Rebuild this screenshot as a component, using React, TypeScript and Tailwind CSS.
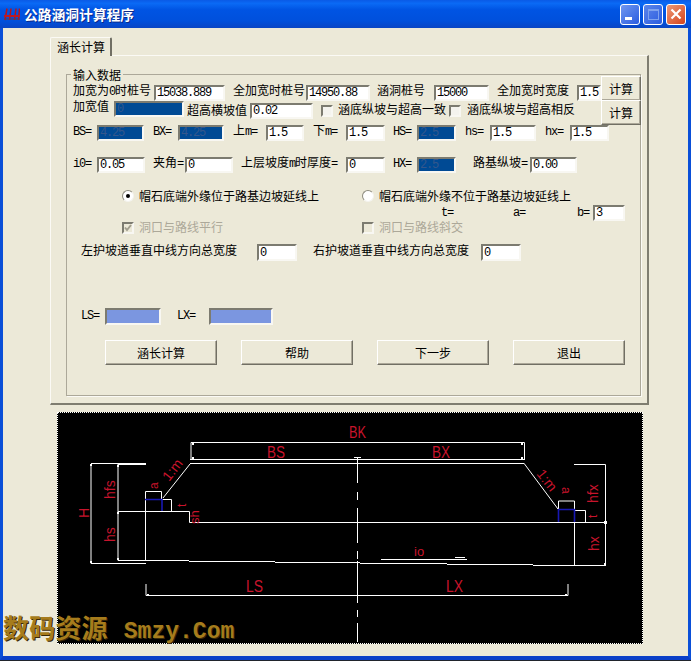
import type { ReactNode } from 'react';

const sunken = 'border-2 border-t-[#7c7b70] border-l-[#7c7b70] border-r-[#f8f7f2] border-b-[#f8f7f2]';
const raised = 'border border-t-white border-l-white border-r-[#716f64] border-b-[#716f64] shadow-[inset_-1px_-1px_0_#aca899] bg-[#ece9d8] flex items-center justify-center shrink-0';

// latin text in the dialog is half width: 6px a character
const M = ({ children }: { children: ReactNode }) => (
  <span className="font-['Liberation_Mono',monospace] text-[12px] leading-[12px] tracking-[-1.2px]">{children}</span>
);

const Field = ({ value, className, tone = 'white' }: { value?: string; className: string; tone?: 'white' | 'blue' | 'soft' }) => {
  const bg = tone === 'blue' ? 'bg-[#004a94] text-[#34578c]' : tone === 'soft' ? 'bg-[#7b96e0]' : 'bg-white text-black';
  return (
    <div className={`${className} ${sunken} ${bg} shrink-0 pl-[1px] flex items-center overflow-hidden`}>
      <M>{value}</M>
    </div>
  );
};

const Check = ({ className, checked, disabled }: { className: string; checked?: boolean; disabled?: boolean }) => (
  <div className={`${className} ${sunken} w-[12px] h-[12px] shrink-0 ${disabled ? 'bg-[#ece9d8]' : 'bg-[#f4f3ee]'}`}>
    {checked && (
      <svg viewBox="0 0 8 8" className="w-[8px] h-[8px] block">
        <path d="M1 3.5 L3 6 L7 1" fill="none" stroke="#a19e8e" strokeWidth="2" />
      </svg>
    )}
  </div>
);

const Radio = ({ className, selected }: { className: string; selected?: boolean }) => (
  <div className={`${className} w-[12px] h-[12px] shrink-0 rounded-full bg-white border border-t-[#8d8b7e] border-l-[#8d8b7e] border-r-[#f4f3ee] border-b-[#f4f3ee] flex items-center justify-center`}>
    {selected && <div className="w-[4px] h-[4px] rounded-full bg-black" />}
  </div>
);

const WinButton = ({ className, children }: { className: string; children: ReactNode }) => (
  <div className={`${className} w-[20px] h-[21px] rounded-[3px] border border-white shrink-0 relative flex items-center justify-center`}>{children}</div>
);

const Diagram = () => (
  <svg viewBox="58 413 584 230" className="block w-full h-full">
    <g stroke="#ffffff" strokeWidth="1" fill="none">
      {/* top width */}
      <path d="M191 460 V442.5 H524.5 V460 M190 459.5 H524.5 M190 463.5 H524.5" />
      <path d="M190 464 L163 498 M524.5 464 L558 509" />
      {/* left step */}
      <path d="M145.5 491.5 H161.5 V499.5 H171.5 V511.5 M145.5 491.5 V560.5" />
      <path d="M118 511.5 H189.5 V522.5 H607" />
      <path d="M91 464 V563.5 M118 464 V560.5 M91 463.5 H146 M118 464.5 H146 M91 563.5 H146" />
      <path d="M118 560.5 H189 M189 561.5 H275 M275 562.5 H360 M360 563.5 H447 M447 564.5 H533 M533 565.5 H606" />
      {/* right step */}
      <path d="M558.5 509 V501 H574.5 V509 M574.5 522 V565 M574 510.5 H585.5 V522" />
      <path d="M574 464.5 H605.5 V565" />
      {/* bottom width */}
      <path d="M146 584 V595.5 H568 V584" />
      <path d="M381 559.5 H467 M455 557.5 H465" />
      {/* centre line */}
      <path d="M357.5 457 V483 M357.5 492 V500 M357.5 508 V543 M357.5 551 V559 M357.5 561 V603 M357.5 610 V617 M357.5 623 V642" />
    </g>
    <path d="M145 499.5 H162 V511 M558 509.5 H575 M558.5 509 V522 M574.5 509 V522" stroke="#1818b4" strokeWidth="1.6" fill="none" />
    <g fill="#ffffff">
      <rect x="192" y="443" width="2" height="2" />
      <rect x="192" y="457" width="2" height="2" />
      <rect x="521" y="443" width="2" height="2" />
      <rect x="521" y="457" width="2" height="2" />
      <rect x="90" y="464" width="2" height="2" />
      <rect x="90" y="561" width="2" height="2" />
      <rect x="117" y="465" width="2" height="2" />
      <rect x="117" y="512" width="2" height="2" />
      <rect x="117" y="558" width="2" height="2" />
      <rect x="147" y="594" width="2" height="2" />
      <rect x="565" y="594" width="2" height="2" />
      <rect x="604" y="521" width="3" height="3" />
      <rect x="604" y="563" width="2" height="2" />
      <rect x="354" y="457" width="7" height="1" />
      <rect x="354" y="595" width="7" height="1" />
    </g>
    <g fill="#c8142c" fontFamily="'Liberation Sans', sans-serif" fontSize="16" lengthAdjust="spacingAndGlyphs">
      <text x="349" y="438" textLength="17" lengthAdjust="spacingAndGlyphs">BK</text>
      <text x="267" y="458" textLength="18" lengthAdjust="spacingAndGlyphs">BS</text>
      <text x="432" y="458" textLength="18" lengthAdjust="spacingAndGlyphs">BX</text>
      <text x="246" y="592" textLength="17" lengthAdjust="spacingAndGlyphs">LS</text>
      <text x="446" y="592" textLength="17" lengthAdjust="spacingAndGlyphs">LX</text>
      <text x="414" y="556" fontSize="13">io</text>
      <text transform="translate(89 518) rotate(-90)" fontSize="14">H</text>
      <text transform="translate(115 499) rotate(-90)" fontSize="14">hfs</text>
      <text transform="translate(115 542) rotate(-90)" fontSize="14">hs</text>
      <text transform="translate(169 482) rotate(-52)" fontSize="14">1:m</text>
      <text transform="translate(158 489) rotate(-90)" fontSize="12">a</text>
      <text transform="translate(186 507) rotate(-90)" fontSize="12">t</text>
      <text transform="translate(199 524) rotate(-90)" fontSize="13">sh</text>
      <text transform="translate(536 474) rotate(52)" fontSize="14">1:m</text>
      <text transform="translate(562 487) rotate(90)" fontSize="12">a</text>
      <text transform="translate(598 503) rotate(-90)" fontSize="14">hfx</text>
      <text transform="translate(597 518) rotate(-90)" fontSize="12">t</text>
      <text transform="translate(599 551) rotate(-90)" fontSize="14">hx</text>
    </g>
  </svg>
);

const App = () => {
  return (
    <div className="w-[691px] h-[661px] overflow-hidden flex flex-col bg-[#ece9d8] text-black text-[12px] leading-[14px] whitespace-nowrap font-['Noto_Sans_CJK_SC',sans-serif]">
      {/* Title bar */}
      <div className="h-[28px] shrink-0 flex items-center pl-[4px] pr-[5px] bg-[linear-gradient(180deg,#0a5ae6_0%,#0a6af5_12%,#0054e3_35%,#0050dc_75%,#0a45c4_100%)]">
        <svg viewBox="0 0 16 14" className="w-[16px] h-[14px] shrink-0">
          <path d="M3 1.5 L1 13 M7 1.5 L5.5 13 M12 1.5 L10.5 13 M15.5 1.5 L14.5 13" fill="none" stroke="#b8141c" strokeWidth="1.5" />
          <path d="M0 9 H16" fill="none" stroke="#c01820" strokeWidth="2" />
          <path d="M0 12 H16" fill="none" stroke="#5a3a50" strokeWidth="1" />
        </svg>
        <span className="ml-[4px] text-white font-bold text-[13.75px] [text-shadow:1px_1px_0_#0a2a8a]">公路涵洞计算程序</span>
        <div className="ml-auto flex gap-[3px]">
          <WinButton className="bg-[linear-gradient(135deg,#6f97f0,#2a5ce0)]">
            <div className="absolute left-[4px] bottom-[4px] w-[7px] h-[3px] bg-white" />
          </WinButton>
          <WinButton className="border-[#7ea2ee] bg-[linear-gradient(135deg,#5d86ea,#2a5ce0)]">
            <div className="w-[11px] h-[11px] border border-[#7ea2ee] border-t-2" />
          </WinButton>
          <WinButton className="bg-[linear-gradient(135deg,#ee9a78,#d4431c)]">
            <svg viewBox="0 0 12 12" className="w-[12px] h-[12px]">
              <path d="M1.5 1.5 L10.5 10.5 M10.5 1.5 L1.5 10.5" stroke="#fff" strokeWidth="2.2" />
            </svg>
          </WinButton>
        </div>
      </div>

      {/* Client area */}
      <div className="flex-1 border-x-[3px] border-b-[4px] border-x-[#0a4fd8] border-b-[#0a3fc8]">
        <div className="ml-[47px] mt-[9px] w-[62px] h-[19px] bg-[#ece9d8] border-t border-l border-t-[#fbfaf5] border-l-[#fbfaf5] border-r-2 border-r-[#716f64] rounded-t-[2px] flex items-center pl-[6px] relative z-10 mb-[-1px]">
          涵长计算
        </div>

        {/* Tab panel */}
        <div className="ml-[47px] w-[599px] h-[350px] border-t border-l border-t-[#fbfaf5] border-l-[#fbfaf5] border-r-2 border-b-2 border-r-[#7f7d70] border-b-[#7f7d70] pt-[18px] pl-[15px]">
          <div className="relative w-[575px] h-[322px] border border-[#aca899] shadow-[1px_1px_0_#fbfaf5] flex flex-col">
            <div className="absolute left-[4px] top-[-7px] px-[2px] bg-[#ece9d8] leading-[13px]">输入数据</div>

            <button className={`${raised} absolute left-[534px] top-[1px] w-[40px] h-[25px] text-[12px]`}>计算</button>
            <button className={`${raised} absolute left-[534px] top-[25px] w-[40px] h-[25px] text-[12px]`}>计算</button>

            <div className="mt-[8px] h-[16px] pl-[6px] flex items-start">
              <span className="w-[81px]">加宽为<M>0</M>时桩号</span>
              <Field value="15038.889" className="w-[71px] h-[16px] mt-[2px]" />
              <span className="ml-[8px] w-[72px]">全加宽时桩号</span>
              <Field value="14950.88" className="ml-[1px] w-[64px] h-[16px] mt-[2px]" />
              <span className="ml-[7px] w-[48px]">涵洞桩号</span>
              <Field value="15000" className="ml-[9px] w-[55px] h-[16px] mt-[2px]" />
              <span className="ml-[8px] w-[72px]">全加宽时宽度</span>
              <Field value="1.5" className="ml-[8px] w-[24px] h-[16px] mt-[2px]" />
            </div>

            <div className="h-[24px] pl-[6px] flex items-start">
              <span className="w-[36px]">加宽值</span>
              <Field value="0" tone="blue" className="ml-[5px] w-[70px] h-[16px] mt-[2px]" />
              <span className="ml-[3px] w-[60px] mt-[4px]">超高横坡值</span>
              <Field value="0.02" className="ml-[3px] w-[63px] h-[16px] mt-[4px]" />
              <Check className="ml-[8px] mt-[6px]" />
              <span className="ml-[5px] w-[108px] mt-[3px]">涵底纵坡与超高一致</span>
              <Check className="ml-[3px] mt-[6px]" />
              <span className="ml-[6px] w-[108px] mt-[3px]">涵底纵坡与超高相反</span>
            </div>

            <div className="h-[32px] pl-[6px] flex items-start">
              <span className="w-[24px]"><M>BS=</M></span>
              <Field value="4.25" tone="blue" className="w-[47px] h-[16px] mt-[2px]" />
              <span className="ml-[9px] w-[25px]"><M>BX=</M></span>
              <Field value="4.25" tone="blue" className="w-[46px] h-[16px] mt-[2px]" />
              <span className="ml-[9px] w-[33px]">上<M>m=</M></span>
              <Field value="1.5" className="w-[38px] h-[16px] mt-[2px]" />
              <span className="ml-[9px] w-[33px]">下<M>m=</M></span>
              <Field value="1.5" className="w-[39px] h-[16px] mt-[2px]" />
              <span className="ml-[8px] w-[24px]"><M>HS=</M></span>
              <Field value="2.5" tone="blue" className="w-[39px] h-[16px] mt-[2px]" />
              <span className="ml-[9px] w-[25px]"><M>hs=</M></span>
              <Field value="1.5" className="w-[46px] h-[16px] mt-[2px]" />
              <span className="ml-[9px] w-[25px]"><M>hx=</M></span>
              <Field value="1.5" className="w-[39px] h-[16px] mt-[2px]" />
            </div>

            <div className="h-[34px] pl-[6px] flex items-start">
              <span className="w-[24px]"><M>i0=</M></span>
              <Field value="0.05" className="w-[48px] h-[16px] mt-[2px]" />
              <span className="ml-[8px] w-[32px]">夹角<M>=</M></span>
              <Field value="0" className="w-[48px] h-[16px] mt-[2px]" />
              <span className="ml-[8px] w-[105px]">上层坡度<M>m</M>时厚度<M>=</M></span>
              <Field value="0" className="w-[39px] h-[16px] mt-[2px]" />
              <span className="ml-[8px] w-[24px]"><M>HX=</M></span>
              <Field value="2.5" tone="blue" className="w-[39px] h-[16px] mt-[2px]" />
              <span className="ml-[17px] w-[57px]">路基纵坡<M>=</M></span>
              <Field value="0.00" className="w-[47px] h-[16px] mt-[2px]" />
            </div>

            <div className="h-[15px] pl-[55px] flex items-start">
              <Radio selected className="mt-[1px]" />
              <span className="ml-[5px] w-[180px]">帽石底端外缘位于路基边坡延线上</span>
              <Radio className="ml-[43px] mt-[1px]" />
              <span className="ml-[5px]">帽石底端外缘不位于路基边坡延线上</span>
            </div>

            <div className="h-[16px] pl-[374px] flex items-start">
              <span className="w-[72px]"><M>t=</M></span>
              <span className="w-[64px]"><M>a=</M></span>
              <span className="w-[16px]"><M>b=</M></span>
              <Field value="3" className="w-[32px] h-[16px] mt-[1px]" />
            </div>

            <div className="h-[23px] pl-[55px] flex items-start text-[#aca899]">
              <Check checked disabled className="mt-[2px]" />
              <span className="ml-[5px] w-[180px]">洞口与路线平行</span>
              <Check disabled className="ml-[43px] mt-[2px]" />
              <span className="ml-[5px]">洞口与路线斜交</span>
            </div>

            <div className="h-[64px] pl-[14px] flex items-start">
              <span className="w-[176px]">左护坡道垂直中线方向总宽度</span>
              <Field value="0" className="w-[40px] h-[17px] mt-[1px]" />
              <span className="ml-[16px] w-[168px]">右护坡道垂直中线方向总宽度</span>
              <Field value="0" className="w-[40px] h-[17px] mt-[1px]" />
            </div>

            <div className="h-[33px] pl-[14px] flex items-start">
              <span className="w-[24px]"><M>LS=</M></span>
              <Field tone="soft" className="w-[56px] h-[17px] mt-[1px]" />
              <span className="ml-[16px] w-[32px]"><M>LX=</M></span>
              <Field tone="soft" className="w-[64px] h-[17px] mt-[1px]" />
            </div>

            <div className="pl-[38px] flex gap-[24px]">
              <button className={`${raised} w-[112px] h-[25px] text-[12px]`}>涵长计算</button>
              <button className={`${raised} w-[112px] h-[25px] text-[12px]`}>帮助</button>
              <button className={`${raised} w-[112px] h-[25px] text-[12px]`}>下一步</button>
              <button className={`${raised} w-[112px] h-[25px] text-[12px]`}>退出</button>
            </div>
          </div>
        </div>

        {/* Drawing */}
        <div className="relative ml-[54px] mt-[7px] w-[586px] h-[232px] bg-black border border-dotted border-white">
          <Diagram />
          <div className="absolute left-[-55px] top-[198px] flex items-baseline text-[#a67c1c] font-bold [text-shadow:1px_1px_0_#3a2a08]">
            <span className="text-[26px] leading-[32px] tracking-[0.2px]">数码资源</span>
            <span className="ml-[16px] font-['Liberation_Mono',monospace] text-[23px] leading-[32px]">Smzy.Com</span>
          </div>
        </div>
      </div>
      <div className="h-[1px] shrink-0 bg-[#20242c]" />
    </div>
  );
};

export default App;
